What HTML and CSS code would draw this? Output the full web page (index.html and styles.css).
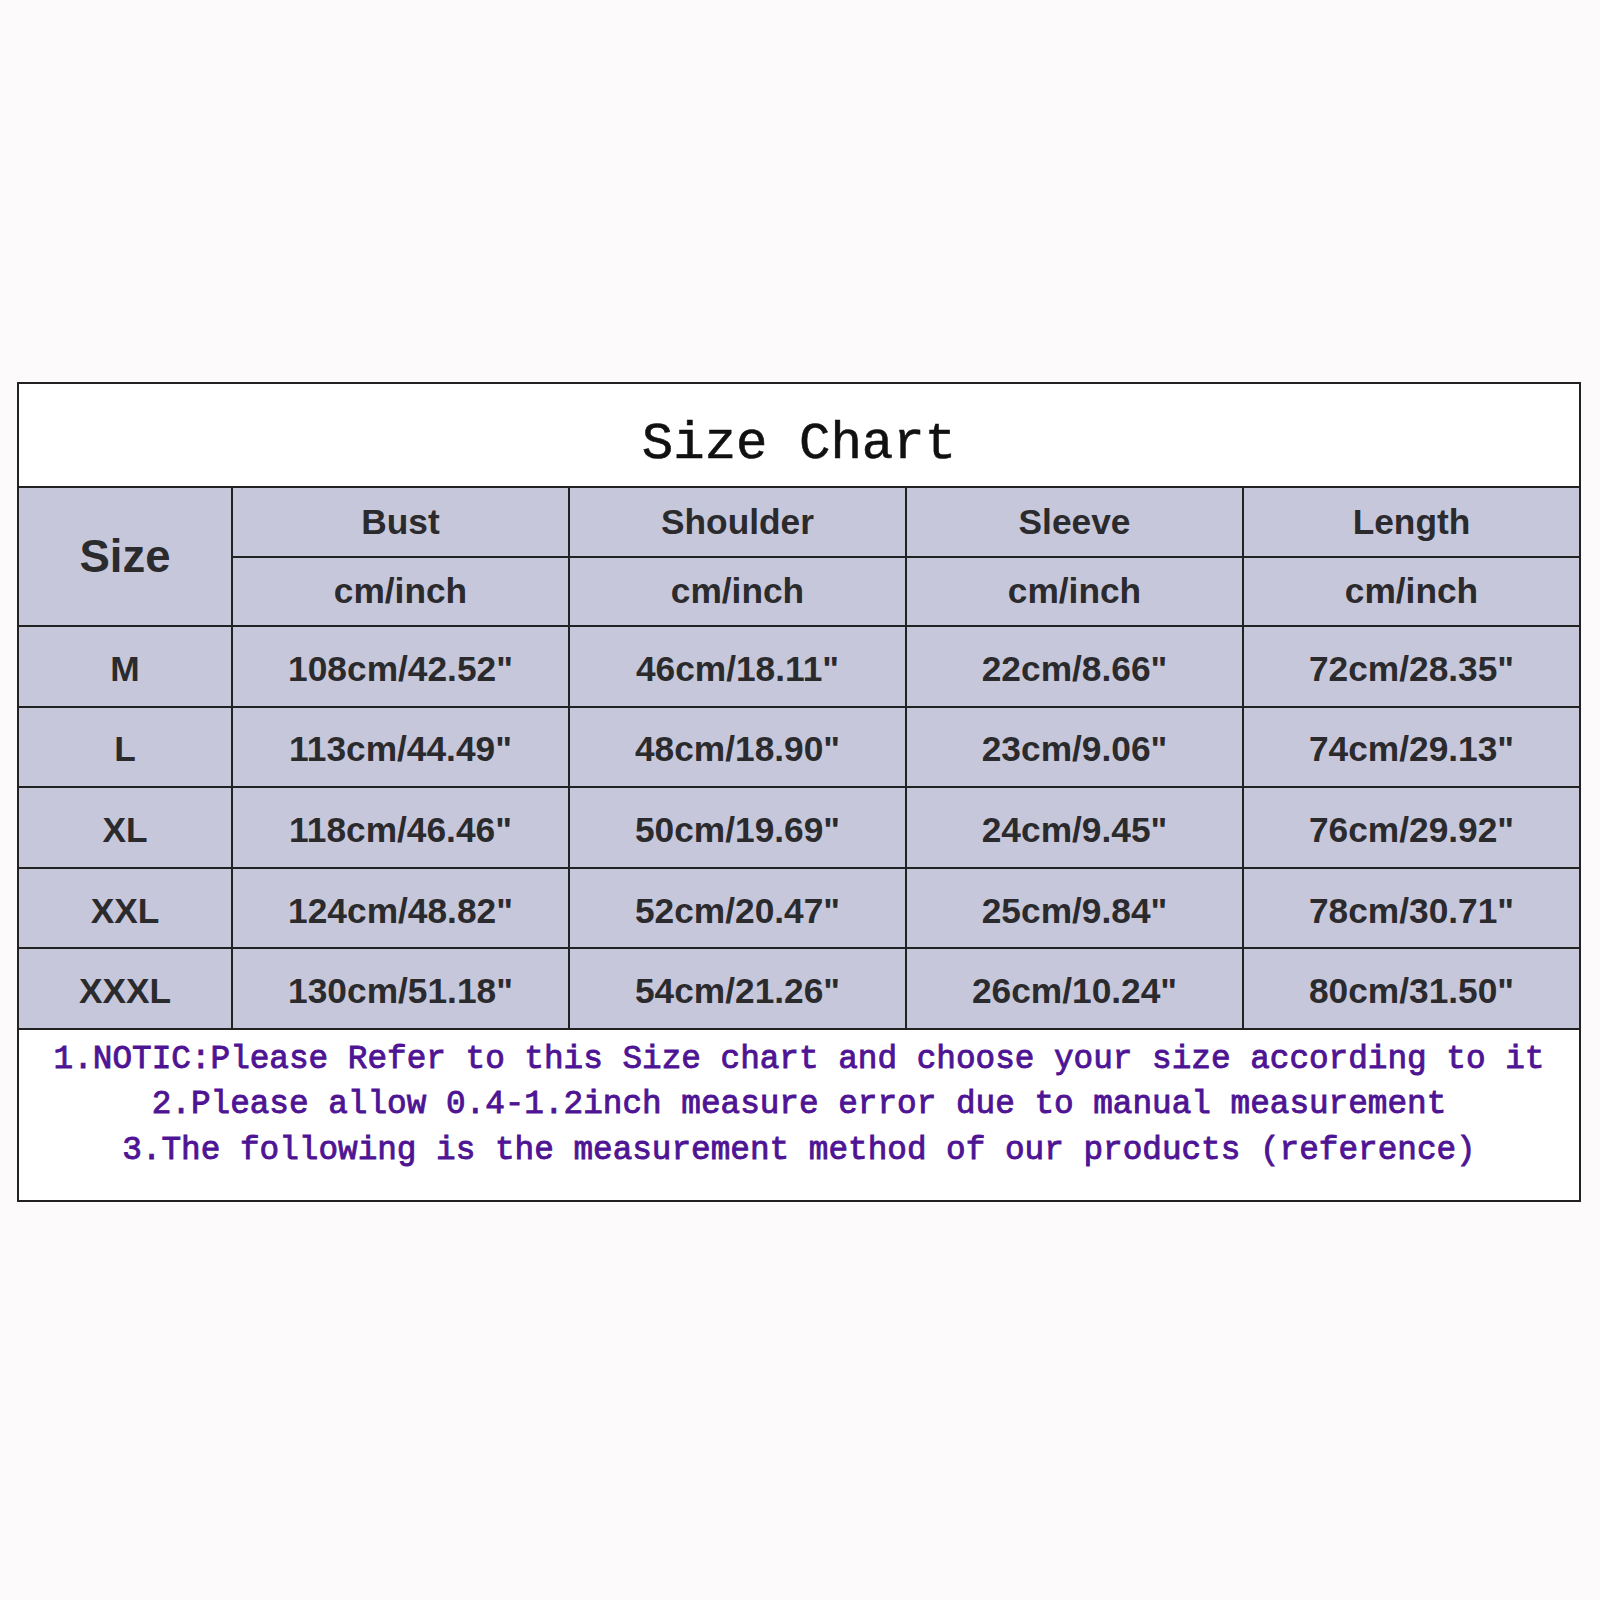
FILE: index.html
```html
<!DOCTYPE html>
<html lang="en">
<head>
<meta charset="utf-8">
<title>Size Chart</title>
<link rel="stylesheet" href="styles.css">
</head>
<body>
<main class="page">
  <table class="chart">
    <colgroup>
      <col class="c-size">
      <col class="c-val"><col class="c-val"><col class="c-val"><col class="c-val">
    </colgroup>
    <tr class="title-row">
      <td colspan="5" class="title">Size Chart</td>
    </tr>
    <tr class="head-row">
      <td rowspan="2" class="size-label">Size</td>
      <td>Bust</td><td>Shoulder</td><td>Sleeve</td><td>Length</td>
    </tr>
    <tr class="head-row">
      <td>cm/inch</td><td>cm/inch</td><td>cm/inch</td><td>cm/inch</td>
    </tr>
    <tr class="data-row">
      <td>M</td><td>108cm/42.52"</td><td>46cm/18.11"</td><td>22cm/8.66"</td><td>72cm/28.35"</td>
    </tr>
    <tr class="data-row">
      <td>L</td><td>113cm/44.49"</td><td>48cm/18.90"</td><td>23cm/9.06"</td><td>74cm/29.13"</td>
    </tr>
    <tr class="data-row">
      <td>XL</td><td>118cm/46.46"</td><td>50cm/19.69"</td><td>24cm/9.45"</td><td>76cm/29.92"</td>
    </tr>
    <tr class="data-row">
      <td>XXL</td><td>124cm/48.82"</td><td>52cm/20.47"</td><td>25cm/9.84"</td><td>78cm/30.71"</td>
    </tr>
    <tr class="data-row">
      <td>XXXL</td><td>130cm/51.18"</td><td>54cm/21.26"</td><td>26cm/10.24"</td><td>80cm/31.50"</td>
    </tr>
    <tr class="notes-row">
      <td colspan="5" class="notes">
        <p>1.NOTIC:Please Refer to this Size chart and choose your size according to it</p>
        <p>2.Please allow 0.4-1.2inch measure error due to manual measurement</p>
        <p>3.The following is the measurement method of our products (reference)</p>
      </td>
    </tr>
  </table>
</main>
</body>
</html>
```
FILE: styles.css
```css
html, body {
  margin: 0;
  padding: 0;
  background: #fdfafb;
}

.page {
  width: 1600px;
  height: 1600px;
  padding: 382px 0 0 17px;
  box-sizing: border-box;
}

.chart {
  border-collapse: collapse;
  border: 2px solid #222;
  background: #ffffff;
  table-layout: fixed;
  width: 1564px;
}

.c-size { width: 214px; }
.c-val { width: 337px; }

.chart td {
  border: 2px solid #222;
  padding: 0;
  text-align: center;
  vertical-align: middle;
}

.chart .title-row td {
  height: 84px;
  padding-top: 18px;
  background: #ffffff;
  font-family: "Liberation Mono", "DejaVu Sans Mono", monospace;
  font-size: 52.4px;
  color: #111;
  -webkit-text-stroke: 0.6px #111;
}

.head-row td,
.data-row td {
  background: #c7c7db;
  font-family: "Liberation Sans", Arial, sans-serif;
  font-weight: bold;
  font-size: 35.3px;
  color: #2b2b2e;
}

.head-row td { height: 67.5px; }

.chart .data-row td {
  height: 73.6px;
  padding-top: 5px;
}

.head-row td.size-label {
  font-size: 45.5px;
}

.notes {
  background: #ffffff;
  font-family: "Liberation Mono", "DejaVu Sans Mono", monospace;
  font-size: 32.7px;
  color: #4e1494;
  -webkit-text-stroke: 0.9px #4e1494;
}

.chart td.notes {
  padding: 7px 0 27px;
  vertical-align: top;
}

.notes p {
  margin: 0;
  line-height: 45.4px;
  white-space: nowrap;
}
```
